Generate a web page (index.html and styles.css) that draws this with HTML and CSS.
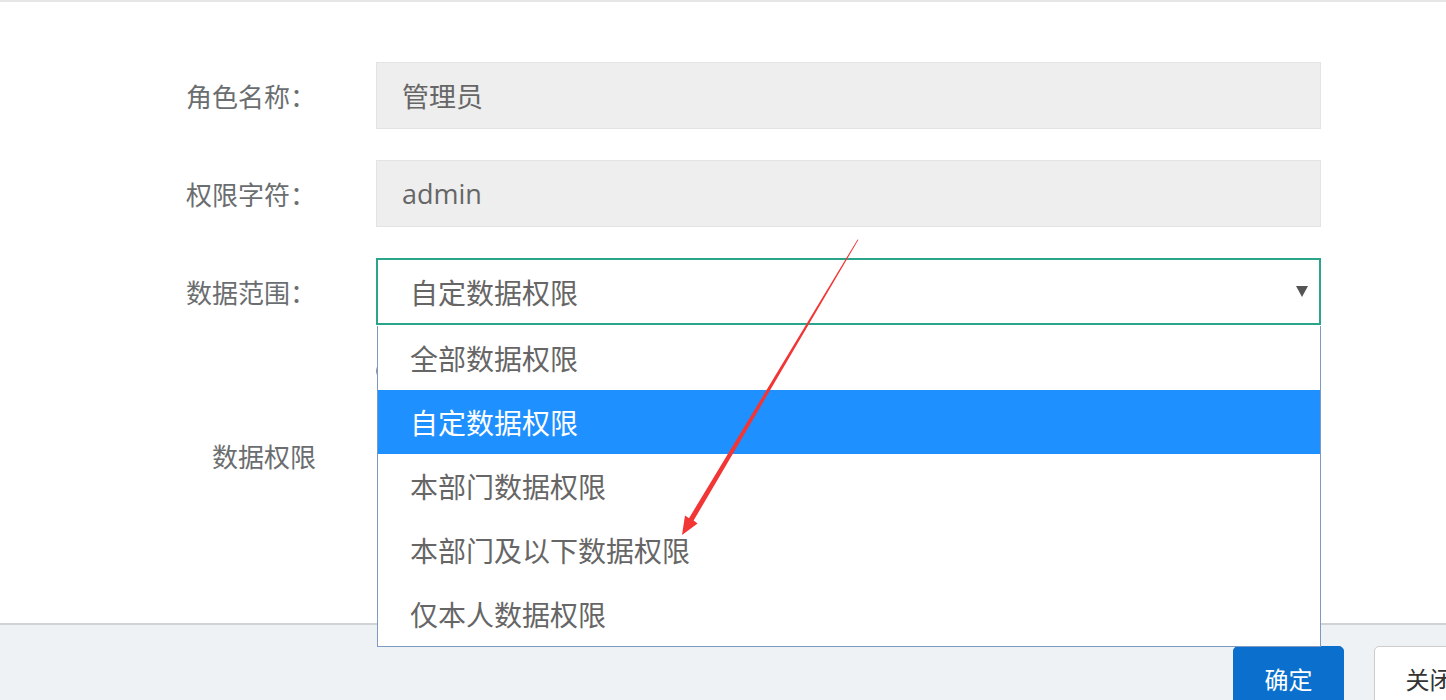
FILE: index.html
```html
<!DOCTYPE html>
<html lang="zh-CN">
<head>
<meta charset="utf-8">
<title>角色</title>
<link rel="stylesheet" href="styles.css">
</head>
<body>
<div class="topbar"></div>
<div class="content">
  <form class="form">
    <div class="row">
      <label class="lbl">角色名称：</label>
      <div class="field input">管理员</div>
    </div>
    <div class="row">
      <label class="lbl">权限字符：</label>
      <div class="field input">admin</div>
    </div>
    <div class="row">
      <label class="lbl">数据范围：</label>
      <div class="select-wrap">
        <div class="field select"><span>自定数据权限</span><i class="caret"></i></div>
        <ul class="dropdown">
          <li class="opt">全部数据权限</li>
          <li class="opt active">自定数据权限</li>
          <li class="opt">本部门数据权限</li>
          <li class="opt">本部门及以下数据权限</li>
          <li class="opt">仅本人数据权限</li>
        </ul>
      </div>
    </div>
    <div class="row row-check">
      <span></span>
      <div class="checks"><span class="radio"></span></div>
    </div>
    <div class="row row-tree">
      <label class="lbl lbl-tree">数据权限</label>
      <div class="tree"></div>
    </div>
  </form>
</div>
<div class="footer">
  <div class="btns">
    <button class="btn btn-primary" type="button">确定</button>
    <button class="btn btn-default" type="button">关闭</button>
  </div>
</div>
<svg class="annot" width="1446" height="700" viewBox="0 0 1446 700">
  <polygon fill="#f23535" points="858.4,239.8 693.6,520.6 697.6,523.4 682,535 685,515.6 689,518.2 857.6,239.4"/>
</svg>
</body>
</html>
```
FILE: styles.css
```css
html, body {
  margin: 0;
  padding: 0;
  overflow: hidden;
}
body {
  position: relative;
  width: 1446px;
  height: 700px;
  background: #ffffff;
  font-family: "Open Sans", "Noto Sans CJK SC", sans-serif;
  color: #676a6c;
}
.topbar {
  height: 2px;
  background: #e6e6e6;
}
.content {
  height: 621px;
  box-sizing: border-box;
  padding-top: 60px;
}
.form {
  margin: 0;
  display: flex;
  flex-direction: column;
  gap: 31px;
}
.row {
  display: grid;
  grid-template-columns: 376px 945px;
  align-items: center;
}
.lbl {
  padding-left: 186px;
  font-family: "Noto Sans CJK SC", sans-serif;
  font-size: 26px;
  color: #6b6e70;
  line-height: 67px;
}
.field {
  height: 67px;
  box-sizing: border-box;
  display: flex;
  align-items: center;
}
.input {
  background: #eeeeee;
  border: 1px solid #e2e3e4;
  padding-left: 25px;
  font-size: 27px;
  color: #666666;
}
.select-wrap {
  position: relative;
}
.select {
  border: 2px solid #2aa58c;
  background: #ffffff;
  padding-left: 32px;
  padding-right: 11px;
  justify-content: space-between;
  font-family: "Noto Sans CJK SC", sans-serif;
  font-size: 28px;
  color: #666666;
}
.caret {
  width: 0;
  height: 0;
  border-left: 6px solid transparent;
  border-right: 6px solid transparent;
  border-top: 11px solid #555555;
}
.dropdown {
  position: absolute;
  top: calc(100% + 1px);
  left: 1px;
  right: 0;
  margin: 0;
  padding: 0;
  list-style: none;
  background: #ffffff;
  border: 1px solid #7d9bc2;
  border-top: none;
  z-index: 10;
}
.opt {
  height: 64px;
  display: flex;
  align-items: center;
  padding-left: 32px;
  font-family: "Noto Sans CJK SC", sans-serif;
  font-size: 28px;
  color: #666666;
}
.opt.active {
  background: #1e90ff;
  color: #ffffff;
}
.row-check {
  height: 30px;
}
.checks {
  display: flex;
  align-items: center;
}
.radio {
  width: 16px;
  height: 16px;
  border: 1px solid #888888;
  border-radius: 50%;
}
.lbl-tree {
  padding-left: 212px;
  line-height: 78px;
}
.tree {
  height: 78px;
}
.footer {
  border-top: 2px solid #d0d3d6;
  background: #eef2f5;
  height: 77px;
  box-sizing: border-box;
  padding-top: 21px;
  display: flex;
  justify-content: flex-end;
  overflow: hidden;
}
.btns {
  display: flex;
  gap: 30px;
  margin-right: -39px;
}
.btn {
  width: 111px;
  height: 64px;
  border-radius: 5px;
  font-family: "Noto Sans CJK SC", sans-serif;
  font-size: 24px;
  padding: 0;
}
.btn-primary {
  background: #0b6fcd;
  border: 1px solid #0b6fcd;
  color: #ffffff;
}
.btn-default {
  background: #ffffff;
  border: 1px solid #cccccc;
  color: #333333;
}
.annot {
  position: absolute;
  top: 0;
  left: 0;
  pointer-events: none;
  z-index: 20;
}
```
